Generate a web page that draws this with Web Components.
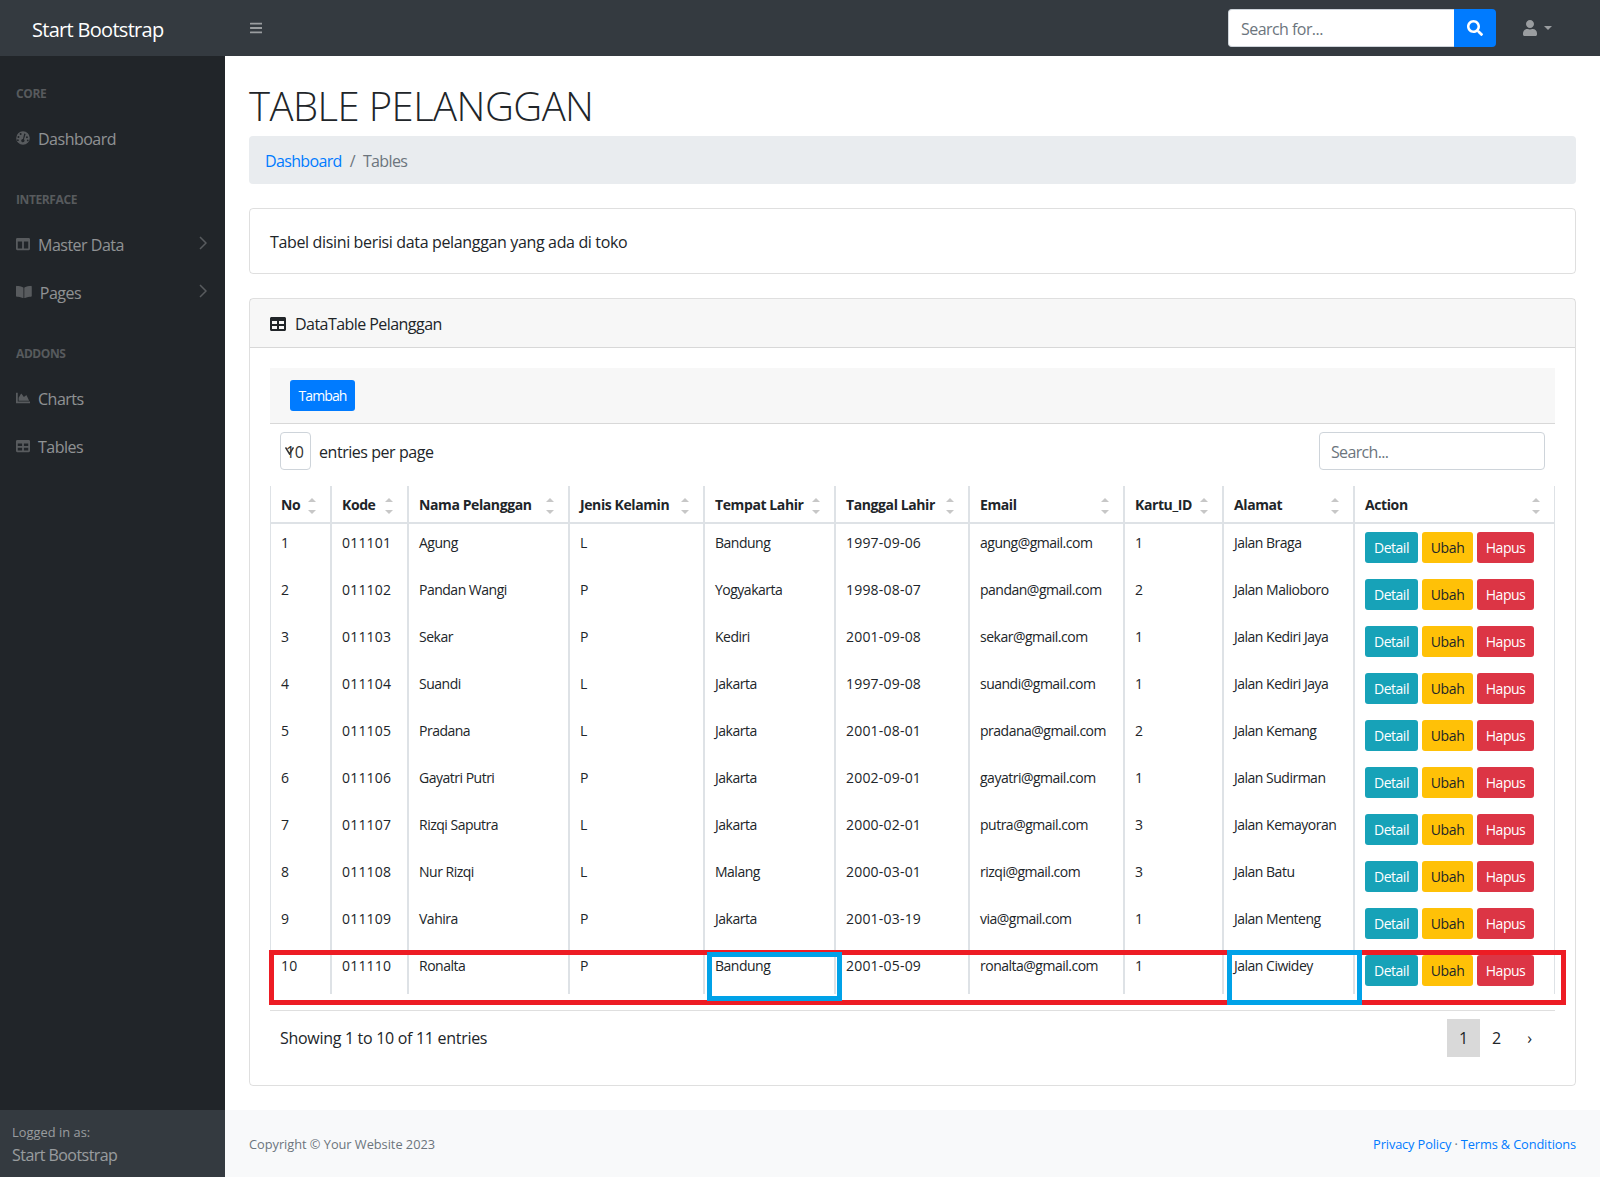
<!DOCTYPE html>
<html lang="id">
<head>
<meta charset="utf-8">
<title>Tables</title>
<style>
  html, body { margin: 0; padding: 0; }
  body {
    font: 16px/1.5 "Open Sans", "Noto Sans", sans-serif;
    letter-spacing: -0.35px;
    color: #212529;
    background: #fff;
  }
  .shell { display: flex; min-height: 1121px; }
</style>
</head>
<body>
<sb-topnav></sb-topnav>
<div class="shell">
  <sb-sidenav>
    <nav-heading>CORE</nav-heading>
    <nav-link icon="gauge">Dashboard</nav-link>
    <nav-heading>INTERFACE</nav-heading>
    <nav-link icon="columns" more>Master Data</nav-link>
    <nav-link icon="book" more>Pages</nav-link>
    <nav-heading>ADDONS</nav-heading>
    <nav-link icon="chart">Charts</nav-link>
    <nav-link icon="table">Tables</nav-link>
  </sb-sidenav>
  <sb-main>
    <page-title>TABLE PELANGGAN</page-title>
    <bread-crumbs></bread-crumbs>
    <info-card>Tabel disini berisi data pelanggan yang ada di toko</info-card>
    <table-card heading="DataTable Pelanggan">
      <data-table></data-table>
    </table-card>
  </sb-main>
</div>

<script>
const ICONS = {
  bars: ['0 0 448 512', 'M16 132h416c8.837 0 16-7.163 16-16V76c0-8.837-7.163-16-16-16H16C7.163 60 0 67.163 0 76v40c0 8.837 7.163 16 16 16zm0 160h416c8.837 0 16-7.163 16-16v-40c0-8.837-7.163-16-16-16H16c-8.837 0-16 7.163-16 16v40c0 8.837 7.163 16 16 16zm0 160h416c8.837 0 16-7.163 16-16v-40c0-8.837-7.163-16-16-16H16c-8.837 0-16 7.163-16 16v40c0 8.837 7.163 16 16 16z'],
  search: ['0 0 512 512', 'M505 442.7L405.3 343c-4.5-4.5-10.6-7-17-7H372c27.6-35.3 44-79.7 44-128C416 93.1 322.9 0 208 0S0 93.1 0 208s93.1 208 208 208c48.3 0 92.7-16.4 128-44v16.3c0 6.4 2.5 12.5 7 17l99.7 99.7c9.4 9.4 24.6 9.4 33.9 0l28.3-28.3c9.4-9.4 9.4-24.6.1-34zM208 336c-70.7 0-128-57.2-128-128 0-70.7 57.2-128 128-128 70.7 0 128 57.2 128 128 0 70.7-57.2 128-128 128z'],
  user: ['0 0 448 512', 'M224 256c70.7 0 128-57.3 128-128S294.7 0 224 0 96 57.3 96 128s57.3 128 128 128zm89.6 32h-16.7c-22.2 10.2-46.9 16-72.9 16s-50.6-5.8-72.9-16h-16.7C60.2 288 0 348.2 0 422.4V464c0 26.5 21.5 48 48 48h352c26.5 0 48-21.5 48-48v-41.6c0-74.2-60.2-134.4-134.4-134.4z'],
  table: ['0 0 512 512', 'M464 32H48C21.49 32 0 53.49 0 80v352c0 26.51 21.49 48 48 48h416c26.51 0 48-21.49 48-48V80c0-26.51-21.49-48-48-48zM224 416H64v-96h160v96zm0-160H64v-96h160v96zm224 160H288v-96h160v96zm0-160H288v-96h160v96z'],
  columns: ['0 0 512 512', 'M464 32H48C21.49 32 0 53.49 0 80v352c0 26.51 21.49 48 48 48h416c26.51 0 48-21.49 48-48V80c0-26.51-21.49-48-48-48zM224 416H64V160h160v256zm224 0H288V160h160v256z'],
  book: ['0 0 576 512', 'M542.22 32.05c-54.8 3.11-163.72 14.43-230.96 55.59-4.64 2.84-7.27 7.89-7.27 13.17v363.87c0 11.55 12.63 18.85 23.28 13.49 69.18-34.82 169.23-44.32 218.7-46.92 16.89-.89 30.02-14.43 30.02-30.66V62.75c.01-17.71-15.35-31.74-33.77-30.7zM264.73 87.64C197.5 46.48 88.58 35.17 33.78 32.05 15.36 31.01 0 45.04 0 62.75V400.6c0 16.24 13.13 29.78 30.02 30.66 49.49 2.6 149.59 12.11 218.77 46.95 10.62 5.35 23.21-1.94 23.21-13.46V100.63c0-5.29-2.62-10.14-7.27-12.99z'],
  chart: ['0 0 512 512', 'M500 384c6.6 0 12 5.4 12 12v40c0 6.6-5.4 12-12 12H12c-6.6 0-12-5.4-12-12V76c0-6.6 5.4-12 12-12h40c6.6 0 12 5.4 12 12v308h436zM372.7 159.5L288 216l-85.3-113.7c-5.1-6.8-15.5-6.3-19.9 1L96 248v104h384l-89.9-187.8c-3.2-6.5-11.4-8.7-17.4-4.7z'],
  // full disc with the dots and the needle cut out
  gauge: ['0 0 512 512', 'M256 8a248 248 0 1 0 0 496 248 248 0 1 0 0-496zM170 70a36 36 0 1 1 0 72 36 36 0 0 1 0-72zM90 180a36 36 0 1 1 0 72 36 36 0 0 1 0-72zM70 300a34 34 0 1 1 0 68 34 34 0 0 1 0-68zM300 90l52 16-62 200c22 16 30 50 14 76-18 30-58 38-86 20s-36-56-18-84c12-20 34-30 56-28zM400 190a36 36 0 1 1 0 72 36 36 0 0 1 0-72zM430 310a34 34 0 1 1 0 68 34 34 0 0 1 0-68z']
};

class FaIcon extends HTMLElement {
  constructor() {
    super();
    const [box, d] = ICONS[this.getAttribute('name')];
    const root = this.attachShadow({ mode: 'open' });
    root.innerHTML = `
      <style>
        :host { display: inline-flex; height: 1em; flex: none; }
        svg { height: 100%; width: auto; display: block; fill: currentColor; }
      </style>
      <svg viewBox="${box}"><path fill-rule="evenodd" d="${d}"/></svg>`;
  }
}

class SbTopnav extends HTMLElement {
  constructor() {
    super();
    this.attachShadow({ mode: 'open' }).innerHTML = `
      <style>
        :host { display: flex; align-items: center; height: 56px; background: #343a40; }
        .brand { width: 193px; padding-left: 32px; font-size: 20px; color: #fff; line-height: 30px; margin-top: 4px; letter-spacing: -0.7px; }
        .toggle { margin-left: 25px; font-size: 14px; color: rgba(255,255,255,.5); display: flex; }
        form { margin-left: auto; display: flex; height: 38px; }
        .input {
          box-sizing: border-box; width: 226px; padding: 7px 12px 5px; background: #fff;
          border: 1px solid #ced4da; border-right: 0; border-radius: 4px 0 0 4px; color: #6c757d; letter-spacing: -0.55px;
        }
        .go {
          width: 42px; display: flex; align-items: center; justify-content: center;
          background: #007bff; color: #fff; font-size: 16px; border-radius: 0 4px 4px 0;
        }
        .user {
          margin: 0 48px 0 27px; display: flex; align-items: center; gap: 7px;
          font-size: 16px; color: rgba(255,255,255,.5);
        }
        .caret { width: 0; height: 0; border: 4.500px solid transparent; border-top-color: currentColor; border-bottom: 0; }
      </style>
      <div class="brand">Start Bootstrap</div>
      <div class="toggle"><fa-icon name="bars"></fa-icon></div>
      <form>
        <div class="input">Search for...</div>
        <div class="go"><fa-icon name="search"></fa-icon></div>
      </form>
      <div class="user"><fa-icon name="user"></fa-icon><span class="caret"></span></div>`;
  }
}

class SbSidenav extends HTMLElement {
  constructor() {
    super();
    this.attachShadow({ mode: 'open' }).innerHTML = `
      <style>
        :host { display: flex; flex-direction: column; width: 225px; flex: none; background: #212529; color: rgba(255,255,255,.5); }
        .menu { flex: 1; }
        .foot { height: 67px; box-sizing: border-box; padding: 13px 12px 11px; background: #343a40; }
        small { display: block; font-size: 12.800px; line-height: 19px; letter-spacing: 0.05px; }
        .who { line-height: 24px; margin-top: 1px; letter-spacing: -0.55px; }
      </style>
      <div class="menu"><slot></slot></div>
      <div class="foot"><small>Logged in as:</small><div class="who">Start Bootstrap</div></div>`;
  }
}

class NavHeading extends HTMLElement {
  constructor() {
    super();
    this.attachShadow({ mode: 'open' }).innerHTML = `
      <style>
        :host { display: block; padding: 29px 16px 11px; font-size: 12px; line-height: 18px; font-weight: 700; color: rgba(255,255,255,.25); letter-spacing: -0.4px; }
      </style>
      <slot></slot>`;
  }
}

class NavLink extends HTMLElement {
  constructor() {
    super();
    const more = this.hasAttribute('more')
      ? '<svg class="more" viewBox="0 0 8 14"><path d="M1 1l6 6-6 6" fill="none" stroke="currentColor" stroke-width="1.500"/></svg>' : '';
    this.attachShadow({ mode: 'open' }).innerHTML = `
      <style>
        :host {
          display: flex; align-items: center; box-sizing: border-box; height: 48px; padding: 2px 18px 0 16px;
          color: rgba(255,255,255,.5); letter-spacing: -0.5px;
        }
        .ico { color: rgba(255,255,255,.25); font-size: 14px; margin: -2px 8px 0 0; display: flex; }
        .more { width: 8px; height: 14px; margin: -5px 0 0 auto; color: rgba(255,255,255,.25); }
      </style>
      <span class="ico"><fa-icon name="${this.getAttribute('icon')}"></fa-icon></span>
      <slot></slot>${more}`;
  }
}

class SbMain extends HTMLElement {
  constructor() {
    super();
    this.attachShadow({ mode: 'open' }).innerHTML = `
      <style>
        :host { display: flex; flex-direction: column; flex: 1; min-width: 0; }
        .content { padding: 24px 24px 24px; flex: 1; }
        footer {
          height: 67px; box-sizing: border-box; padding: 2px 24px 0; background: #f8f9fa;
          display: flex; align-items: center; justify-content: space-between; font-size: 12.800px; color: #6c757d; letter-spacing: -0.03px;
        }
        .links { letter-spacing: -0.13px; }
        a { color: #007bff; text-decoration: none; }
      </style>
      <div class="content"><slot></slot></div>
      <footer>
        <div>Copyright © Your Website 2023</div>
        <div class="links"><a>Privacy Policy</a> · <a>Terms &amp; Conditions</a></div>
      </footer>`;
  }
}

class PageTitle extends HTMLElement {
  constructor() {
    super();
    this.attachShadow({ mode: 'open' }).innerHTML = `
      <style>
        :host { display: block; box-sizing: border-box; height: 48px; padding-top: 3px; font-size: 40px; line-height: 45px; margin-bottom: 8px; letter-spacing: -0.55px; font-weight: 350; }
      </style>
      <slot></slot>`;
  }
}

class BreadCrumbs extends HTMLElement {
  constructor() {
    super();
    this.attachShadow({ mode: 'open' }).innerHTML = `
      <style>
        :host { display: flex; padding: 13px 16px 11px; margin-bottom: 24px; background: #e9ecef; border-radius: 4px; color: #6c757d; letter-spacing: -0.65px; }
        a { color: #007bff; }
        span { padding: 0 8px; }
      </style>
      <a>Dashboard</a><span>/</span><div>Tables</div>`;
  }
}

class InfoCard extends HTMLElement {
  constructor() {
    super();
    this.attachShadow({ mode: 'open' }).innerHTML = `
      <style>
        :host { display: block; padding: 21px 20px 19px; margin-bottom: 24px; border: 1px solid rgba(0,0,0,.125); border-radius: 4px; }
      </style>
      <slot></slot>`;
  }
}

class TableCard extends HTMLElement {
  constructor() {
    super();
    this.attachShadow({ mode: 'open' }).innerHTML = `
      <style>
        :host { display: block; border: 1px solid rgba(0,0,0,.125); border-radius: 4px; }
        header {
          display: flex; align-items: center; gap: 9px; padding: 13px 20px 11px; background: rgba(0,0,0,.03);
          border-bottom: 1px solid rgba(0,0,0,.125); letter-spacing: -0.55px;
        }
        .body { padding: 20px; }
      </style>
      <header><fa-icon name="table"></fa-icon><span>${this.getAttribute('heading')}</span></header>
      <div class="body"><slot></slot></div>`;
  }
}

class SmallButton extends HTMLElement {
  constructor() {
    super();
    this.attachShadow({ mode: 'open' }).innerHTML = `
      <style>
        :host {
          display: inline-flex; align-items: center; justify-content: center; box-sizing: border-box; height: 31px;
          font-size: 14px; border-radius: 3px; color: #fff; background: #007bff;
          flex: none; letter-spacing: -0.5px;
        }
        :host([kind=info]) { background: #17a2b8; width: 53px; }
        :host([kind=warn]) { background: #ffc107; color: #212529; width: 51px; letter-spacing: -0.35px; }
        :host([kind=danger]) { background: #dc3545; width: 57px; }
        :host([kind=primary]) { width: 65px; letter-spacing: -0.9px; }
      </style>
      <slot></slot>`;
  }
}

const COLUMNS = [
  ['No', 61], ['Kode', 77], ['Nama Pelanggan', 161], ['Jenis Kelamin', 135], ['Tempat Lahir', 131],
  ['Tanggal Lahir', 134], ['Email', 155], ['Kartu_ID', 99], ['Alamat', 131], ['Action', 201]
];

const PELANGGAN = [
  ['1', '011101', 'Agung', 'L', 'Bandung', '1997-09-06', 'agung@gmail.com', '1', 'Jalan Braga'],
  ['2', '011102', 'Pandan Wangi', 'P', 'Yogyakarta', '1998-08-07', 'pandan@gmail.com', '2', 'Jalan Malioboro'],
  ['3', '011103', 'Sekar', 'P', 'Kediri', '2001-09-08', 'sekar@gmail.com', '1', 'Jalan Kediri Jaya'],
  ['4', '011104', 'Suandi', 'L', 'Jakarta', '1997-09-08', 'suandi@gmail.com', '1', 'Jalan Kediri Jaya'],
  ['5', '011105', 'Pradana', 'L', 'Jakarta', '2001-08-01', 'pradana@gmail.com', '2', 'Jalan Kemang'],
  ['6', '011106', 'Gayatri Putri', 'P', 'Jakarta', '2002-09-01', 'gayatri@gmail.com', '1', 'Jalan Sudirman'],
  ['7', '011107', 'Rizqi Saputra', 'L', 'Jakarta', '2000-02-01', 'putra@gmail.com', '3', 'Jalan Kemayoran'],
  ['8', '011108', 'Nur Rizqi', 'L', 'Malang', '2000-03-01', 'rizqi@gmail.com', '3', 'Jalan Batu'],
  ['9', '011109', 'Vahira', 'P', 'Jakarta', '2001-03-19', 'via@gmail.com', '1', 'Jalan Menteng'],
  ['10', '011110', 'Ronalta', 'P', 'Bandung', '2001-05-09', 'ronalta@gmail.com', '1', 'Jalan Ciwidey']
];

class DataTable extends HTMLElement {
  constructor() {
    super();
    const cols = COLUMNS.map(c => `<col style="width:${c[1]}px">`).join('');
    const head = COLUMNS.map(c => `<th>${c[0]}<i class="up"></i><i class="down"></i></th>`).join('');
    // digit-only values run a little wide in the original font
    const cell = v => `<td${/^[\d-]+$/.test(v) ? ' class="num"' : ''}>${v}</td>`;
    const rows = PELANGGAN.map(r => `<tr>${r.map(cell).join('')}<td><div class="acts">
      <small-button kind="info">Detail</small-button><small-button kind="warn">Ubah</small-button><small-button kind="danger">Hapus</small-button>
    </div></td></tr>`).join('');
    this.attachShadow({ mode: 'open' }).innerHTML = `
      <style>
        :host { display: block; position: relative; }
        .tools { padding: 12px 20px; background: rgba(0,0,0,.03); border-bottom: 1px solid rgba(0,0,0,.125); display: flex; }
        .top { display: flex; justify-content: space-between; padding: 8px 10px; margin-bottom: 8px; }
        .len { display: flex; align-items: center; gap: 8px; letter-spacing: -0.45px; }
        .len span { padding-top: 2px; }
        .select {
          box-sizing: border-box; position: relative; width: 31px; height: 38px; border: 1px solid #ced4da; border-radius: 4px;
          display: flex; align-items: center; justify-content: flex-end; padding: 2px 6px 0 0; color: #333; letter-spacing: 0;
        }
        .select svg { position: absolute; left: 4px; top: 14px; width: 9px; height: 8px; }
        .find {
          box-sizing: border-box; width: 226px; height: 38px; padding: 7px 11px 5px; border: 1px solid #ced4da;
          border-radius: 4px; color: #6c757d; letter-spacing: -0.65px;
        }
        .wrap { padding-bottom: 16px; border-bottom: 1px solid rgba(0,0,0,.125); }
        table { table-layout: fixed; width: 1285px; border-collapse: separate; border-spacing: 0; font-size: 14px; letter-spacing: -0.5px; }
        th, td { padding: 8px 10px; border-left: 1px solid #dee2e6; border-right: 1px solid #dee2e6; text-align: left; vertical-align: top; box-sizing: border-box; white-space: nowrap; }
        th { position: relative; height: 38px; padding: 9px 10px 7px; line-height: 20px; font-weight: 700; border-bottom: 2px solid #dee2e6; letter-spacing: -0.4px; }
        td { height: 47px; line-height: 21px; }
        td.num { letter-spacing: 0.2px; }
        th i { position: absolute; right: 14px; width: 0; height: 0; border: 4px solid transparent; opacity: .22; }
        th .up { top: 12px; border-top: 0; border-bottom-color: #000; }
        th .down { top: 24px; border-bottom: 0; border-top-color: #000; }
        .acts { display: flex; gap: 4px; }
        .bottom { display: flex; justify-content: space-between; align-items: center; padding: 8px 9px 8px 10px; letter-spacing: -0.3px; }
        .pages { display: flex; align-items: center; }
        .pages span { width: 33px; height: 38px; display: flex; align-items: center; justify-content: center; }
        .pages .on { background: #d9d9d9; }
        .mark { position: absolute; box-sizing: border-box; border: 5px solid #ed1c24; }
        .mark.blue { border-color: #00a2e8; }
      </style>
      <div class="tools"><small-button kind="primary">Tambah</small-button></div>
      <div class="top">
        <div class="len">
          <div class="select">10<svg viewBox="0 0 9 8"><path d="M.5.5L4.500 7 8.500.5" fill="none" stroke="#333" stroke-width="1.500"/></svg></div>
          <span>entries per page</span>
        </div>
        <div class="find">Search...</div>
      </div>
      <div class="wrap">
        <table>
          <colgroup>${cols}</colgroup>
          <thead><tr>${head}</tr></thead>
          <tbody>${rows}</tbody>
        </table>
      </div>
      <div class="bottom">
        <div>Showing 1 to 10 of 11 entries</div>
        <div class="pages"><span class="on">1</span><span>2</span><span>›</span></div>
      </div>
      <div class="mark" style="left:-1px;top:582px;width:1297px;height:55px"></div>
      <div class="mark blue" style="left:437px;top:584px;width:135px;height:49px"></div>
      <div class="mark blue" style="left:957px;top:582px;width:135px;height:55px"></div>`;
  }
}

customElements.define('fa-icon', FaIcon);
customElements.define('sb-topnav', SbTopnav);
customElements.define('sb-sidenav', SbSidenav);
customElements.define('nav-heading', NavHeading);
customElements.define('nav-link', NavLink);
customElements.define('sb-main', SbMain);
customElements.define('page-title', PageTitle);
customElements.define('bread-crumbs', BreadCrumbs);
customElements.define('info-card', InfoCard);
customElements.define('table-card', TableCard);
customElements.define('small-button', SmallButton);
customElements.define('data-table', DataTable);
</script>
</body>
</html>
